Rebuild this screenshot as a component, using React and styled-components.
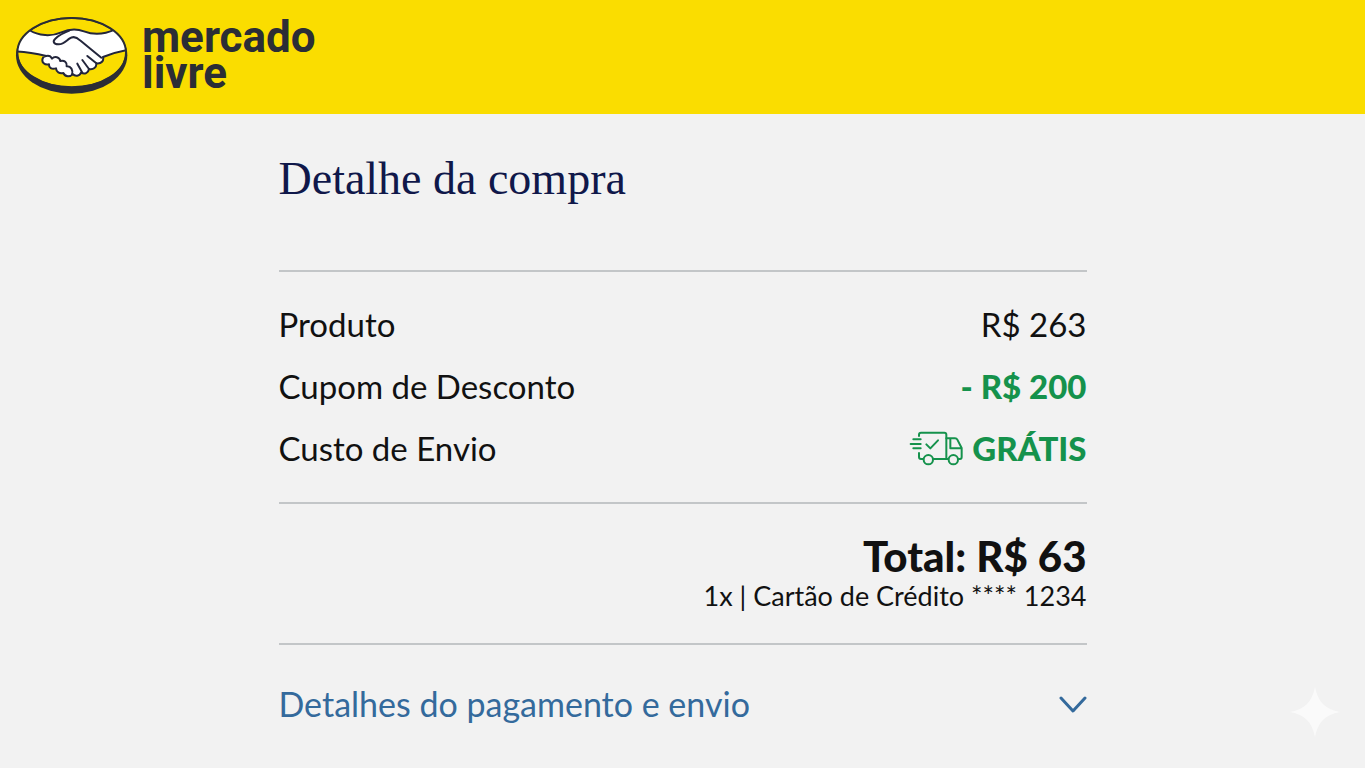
import React, { useState } from "react";
import styled, { createGlobalStyle } from "styled-components";

const GlobalStyle = createGlobalStyle`
  * {
    box-sizing: border-box;
  }

  body {
    margin: 0;
    background: #f2f2f2;
    color: #111;
    font-family: Lato, "Open Sans", sans-serif;
  }
`;

const Page = styled.div`
  position: relative;
  min-height: 100vh;
  overflow: hidden;
`;

const Header = styled.header`
  display: flex;
  align-items: flex-start;
  min-height: 114px;
  padding: 15px;
  background: #fadd00;
`;

const Brand = styled.a`
  display: flex;
  gap: 13px;
  color: #2b2d35;
  text-decoration: none;
`;

const BrandMark = styled.svg`
  width: 114px;
  height: 80px;
`;

const BrandName = styled.span`
  font-family: Roboto, sans-serif;
  font-size: 44px;
  font-weight: 700;
  line-height: 36px;
  padding-top: 4px;
`;

const Main = styled.main`
  max-width: 848px;
  margin: 0 auto;
  padding: 36px 20px;
`;

const Title = styled.h1`
  margin: 0 0 62px;
  color: #10184a;
  font-family: "Liberation Serif", serif;
  font-size: 46px;
  font-weight: 400;
  line-height: 58px;
`;

const Costs = styled.dl`
  margin: 0;
  padding: 21px 0 23px;
  border-top: 2px solid #c3c6c8;
`;

const Row = styled.div`
  display: flex;
  justify-content: space-between;
  font-size: 33px;
  line-height: 62px;
`;

const Label = styled.dt``;

const Value = styled.dd`
  display: flex;
  align-items: center;
  gap: 8px;
  margin: 0;
  color: ${({ $discount }) => ($discount ? "#15924c" : "inherit")};
  font-weight: ${({ $discount }) => ($discount ? 900 : 400)};
`;

const TruckIcon = styled.svg`
  width: 55px;
  height: 35px;
`;

const Summary = styled.section`
  padding: 28px 0 31px;
  border-top: 2px solid #c3c6c8;
  border-bottom: 2px solid #c3c6c8;
  text-align: right;
`;

const Total = styled.p`
  margin: 0;
  font-size: 42px;
  font-weight: 900;
  line-height: 48px;
`;

const Payment = styled.p`
  margin: 0;
  font-size: 27px;
  line-height: 32px;
`;

const DetailsButton = styled.button`
  display: flex;
  align-items: center;
  justify-content: space-between;
  width: 100%;
  margin-top: 35px;
  padding: 0;
  border: 0;
  background: none;
  color: #346a9c;
  font: inherit;
  font-size: 34px;
  line-height: 48px;
  text-align: left;
  cursor: pointer;
`;

const Chevron = styled.svg`
  width: 28px;
  height: 18px;
  transform: ${({ $open }) => ($open ? "rotate(180deg)" : "none")};
`;

const Sparkle = styled.svg`
  position: absolute;
  right: 25px;
  bottom: 31px;
  width: 50px;
  height: 50px;
`;

const Handshake = () => (
  <BrandMark viewBox="45 45 342 240" aria-hidden="true">
    <defs>
      <clipPath id="badge">
        <ellipse cx="215" cy="158" rx="163" ry="104" />
      </clipPath>
    </defs>
    <ellipse cx="215" cy="166" rx="167" ry="115" fill="#2b2d35" />
    <ellipse cx="215" cy="158" rx="161" ry="102" fill="#fadd00" />
    <g
      clipPath="url(#badge)"
      stroke="#23263c"
      strokeWidth="6"
      strokeLinecap="round"
      strokeLinejoin="round"
    >
      <path
        fill="#fff"
        d="M88 90C115 108 155 110 184 97C210 86 232 87 252 94C280 105 312 104 345 88L395 80V148C365 152 335 160 309 171C312 182 305 192 289 190C290 202 280 210 267 207C265 219 254 224 243 218C239 229 225 230 218 222C211 232 195 231 190 219C178 222 169 216 168 205C155 209 146 203 147 193C134 196 124 187 128 176C129 171 134 168 139 168C108 160 80 154 40 154V88Z"
      />
      <path
        fill="none"
        d="M139 168C147 166 153 170 156 176C164 167 179 171 181 183C193 180 202 187 200 199C213 198 220 210 216 224M304 173L240 121C230 111 218 109 208 116C198 123 190 134 175 133C161 133 157 124 166 116C180 103 194 97 208 92M262 168L289 190M247 180L267 207M232 191L247 218"
      />
    </g>
    <ellipse
      cx="215"
      cy="158"
      rx="163"
      ry="104"
      fill="none"
      stroke="#2b2d35"
      strokeWidth="6"
    />
  </BrandMark>
);

const Truck = () => (
  <TruckIcon
    viewBox="60 34 165 105"
    fill="none"
    stroke="#15924c"
    strokeWidth="6"
    strokeLinecap="round"
    strokeLinejoin="round"
    aria-hidden="true"
  >
    <path d="M90 49V45Q90 39 96 39H166Q172 39 172 45V118H134M90 100V112Q90 118 96 118H102" />
    <path d="M73 59H95M65 73H95M73 86H95M112 74L124 86L147 62" />
    <path d="M172 56H198Q203 56 205 60L218 85V112Q218 118 213 118H209M184 57V86H217M172 118H177" />
    <circle cx="118" cy="120" r="14" />
    <circle cx="193" cy="120" r="14" />
  </TruckIcon>
);

const App = () => {
  const [open, setOpen] = useState(false);

  return (
    <Page>
      <GlobalStyle />
      <Header>
        <Brand href="#">
          <Handshake />
          <BrandName>
            mercado
            <br />
            livre
          </BrandName>
        </Brand>
      </Header>
      <Main>
        <Title>Detalhe da compra</Title>
        <Costs>
          <Row>
            <Label>Produto</Label>
            <Value>R$ 263</Value>
          </Row>
          <Row>
            <Label>Cupom de Desconto</Label>
            <Value $discount>- R$ 200</Value>
          </Row>
          <Row>
            <Label>Custo de Envio</Label>
            <Value $discount>
              <Truck />
              GRÁTIS
            </Value>
          </Row>
        </Costs>
        <Summary>
          <Total>Total: R$ 63</Total>
          <Payment>1x | Cartão de Crédito **** 1234</Payment>
        </Summary>
        <DetailsButton
          type="button"
          aria-expanded={open}
          onClick={() => setOpen(!open)}
        >
          Detalhes do pagamento e envio
          <Chevron
            $open={open}
            viewBox="0 0 28 18"
            fill="none"
            stroke="currentColor"
            strokeWidth="3"
            strokeLinecap="round"
            strokeLinejoin="round"
            aria-hidden="true"
          >
            <path d="M2 3L14 16L26 3" />
          </Chevron>
        </DetailsButton>
      </Main>
      <Sparkle viewBox="0 0 50 50" aria-hidden="true">
        <path
          fill="#fafafa"
          d="M25 0C28 15 35 22 50 25C35 28 28 35 25 50C22 35 15 28 0 25C15 22 22 15 25 0Z"
        />
      </Sparkle>
    </Page>
  );
};

export default App;
